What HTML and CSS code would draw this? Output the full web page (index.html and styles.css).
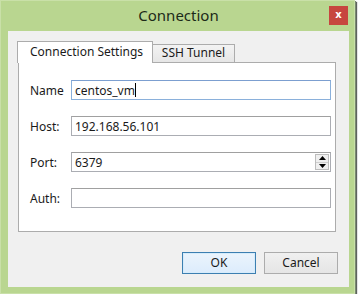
FILE: index.html
```html
<!DOCTYPE html>
<html>
<head>
<meta charset="utf-8">
<link rel="stylesheet" href="styles.css">
</head>
<body>
<div class="window">
  <div class="titlebar">
    <span></span>
    <span class="title">Connection</span>
    <span class="close-wrap"><span class="close">x</span></span>
  </div>
  <div class="client">
    <div class="tabs">
      <div class="tab active">Connection Settings</div>
      <div class="tab">SSH Tunnel</div>
    </div>
    <div class="pane">
      <div class="row">
        <span class="label">Name</span>
        <div class="input focus">centos_vm<span class="caret"></span></div>
      </div>
      <div class="row">
        <span class="label">Host:</span>
        <div class="input">192.168.56.101</div>
      </div>
      <div class="row">
        <span class="label">Port:</span>
        <div class="input spin-input">6379
          <span class="spin">
            <span class="spin-btn"><svg width="7" height="4" viewBox="0 0 7 4"><path d="M0 4 L3.5 0 L7 4 Z" fill="#000"/></svg></span>
            <span class="spin-btn"><svg width="7" height="4" viewBox="0 0 7 4"><path d="M0 0 L3.5 4 L7 0 Z" fill="#000"/></svg></span>
          </span>
        </div>
      </div>
      <div class="row">
        <span class="label">Auth:</span>
        <div class="input"></div>
      </div>
    </div>
    <div class="buttons">
      <div class="btn default">OK</div>
      <div class="btn">Cancel</div>
    </div>
  </div>
</div>
</body>
</html>
```

FILE: styles.css
```css
html, body {
  margin: 0;
  padding: 0;
  background: #ffffff;
}
body {
  font-family: "Noto Sans", "DejaVu Sans", sans-serif;
  font-size: 12px;
  color: #1a1a1a;
}
.window {
  width: 355px;
  height: 294px;
  box-sizing: border-box;
  background: #b9d690;
  border: 1px solid #c9e0a8;
  box-shadow: 1px 1px 0 #7a8a70, 2px 2px 1px rgba(40, 45, 40, 0.75);
  display: flex;
  flex-direction: column;
  padding: 0 5px 6px 7px;
}
.titlebar {
  height: 30px;
  display: grid;
  grid-template-columns: 1fr auto 1fr;
  align-items: center;
}
.title {
  font-size: 15px;
  color: #1c2a18;
  margin-top: -3px;
}
.close-wrap {
  display: flex;
  justify-content: flex-end;
  padding-right: 1px;
  align-self: start;
  padding-top: 5px;
}
.close {
  width: 19px;
  height: 19px;
  background: #c7463f;
  color: #fff;
  font-family: "DejaVu Sans", sans-serif;
  font-weight: bold;
  font-size: 10px;
  line-height: 17px;
  text-align: center;
}
.client {
  flex: 1;
  background: #f0f0f0;
  padding: 10px 13px 0 10px;
  display: flex;
  flex-direction: column;
}
.tabs {
  display: flex;
  align-items: flex-end;
  height: 21px;
  margin-left: -1px;
  position: relative;
  z-index: 1;
}
.tab {
  box-sizing: border-box;
  border: 1px solid #acacac;
  border-bottom: none;
  height: 18px;
  padding: 0 7px;
  line-height: 16px;
  background: linear-gradient(#f3f3f3, #e6e6e6);
  margin-left: -1px;
}
.tab.active {
  height: 22px;
  margin-bottom: -1px;
  background: #ffffff;
  width: 136px;
  padding: 0 0 0 12px;
  line-height: 20px;
  margin-left: 0;
}
.tab:nth-child(2) {
  width: 83px;
  text-align: center;
  padding: 0;
}
.pane {
  height: 170px;
  box-sizing: border-box;
  background: #ffffff;
  border: 1px solid #acacac;
  padding: 17px 4px 0 11px;
  display: flex;
  flex-direction: column;
  gap: 16px;
}
.row {
  display: flex;
  align-items: center;
  height: 20px;
}
.label {
  width: 41px;
  color: #1a1a1a;
}
.input {
  flex: 1;
  height: 20px;
  box-sizing: border-box;
  border: 1px solid #abadb3;
  border-top-color: #a0a0a0;
  padding: 0 3px;
  line-height: 17px;
  display: flex;
  align-items: center;
  background: #fff;
}
.input.focus {
  border-color: #8ab0db;
  border-top-color: #7c9fd0;
}
.caret {
  display: inline-block;
  width: 1px;
  height: 14px;
  background: #000;
}
.spin-input {
  justify-content: space-between;
  padding-right: 1px;
}
.spin {
  display: flex;
  flex-direction: column;
  width: 14px;
  height: 16px;
  box-sizing: border-box;
  border: 1px solid #bdbdbd;
  background: #efefef;
}
.spin-btn {
  flex: 1;
  display: flex;
  align-items: center;
  justify-content: center;
}
.spin-btn + .spin-btn {
  border-top: 1px solid #cfcfcf;
}
.buttons {
  display: flex;
  justify-content: flex-end;
  gap: 8px;
  margin-top: 20px;
  margin-right: -2px;
}
.btn {
  width: 74px;
  height: 22px;
  box-sizing: border-box;
  border: 1px solid #acacac;
  background: linear-gradient(#f0f0f0, #e5e5e5);
  text-align: center;
  line-height: 20px;
}
.btn.default {
  border-color: #3c7fb1;
  box-shadow: inset 0 0 0 1px #d6ecfb;
  background: linear-gradient(#ebf4fc, #dcecfc);
}
```
